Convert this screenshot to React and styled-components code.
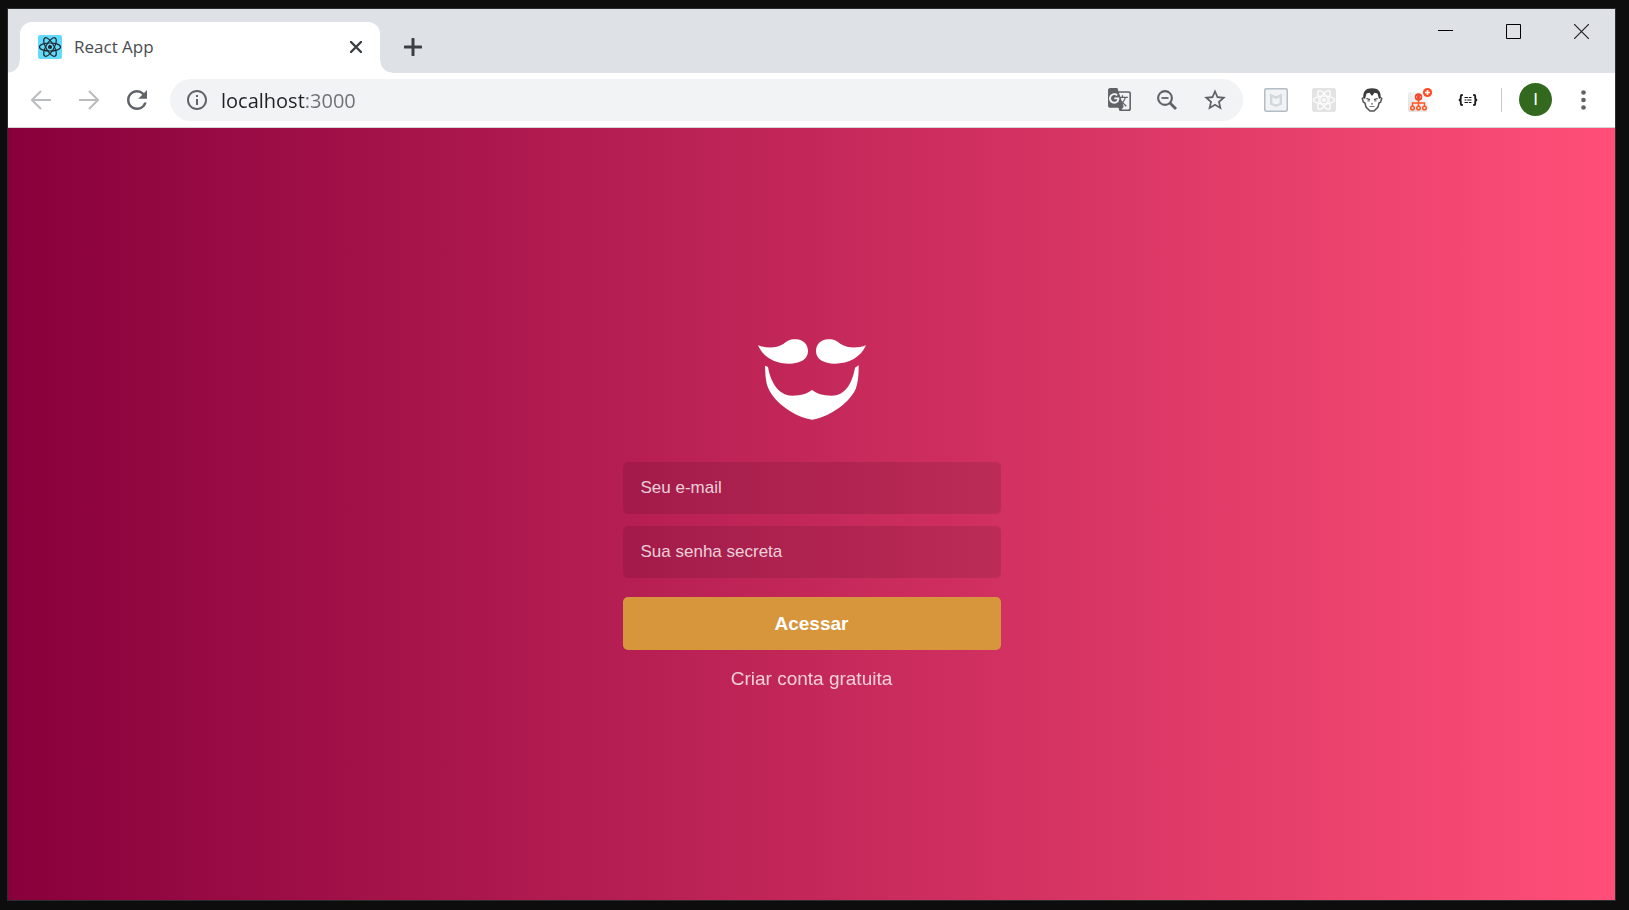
import React from "react";
import styled, { createGlobalStyle } from "styled-components";
import {
  MdGTranslate,
  MdInfoOutline,
  MdRefresh,
  MdStarBorder,
} from "react-icons/md";

const GlobalStyle = createGlobalStyle`
  *, *::before, *::after { box-sizing: border-box; }
  html { background: #0d0d0d; }
  body { margin: 0; font-family: "Liberation Sans", Arial, sans-serif; }
  button, input { font: inherit; }
  svg { display: block; flex: none; }
`;

const Desktop = styled.div`
  display: flex;
  min-height: 100vh;
  padding: 8px 13px 9px 7px;
`;

const BrowserWindow = styled.div`
  flex: 1;
  min-width: 0;
  display: flex;
  flex-direction: column;
  border: 1px solid #2b2d31;
  background: #fff;
`;

const TabStrip = styled.header`
  display: flex;
  height: 64px;
  padding: 13px 0 0 12px;
  background: #dee1e6;
`;

const Tab = styled.div`
  position: relative;
  display: flex;
  align-items: center;
  gap: 12px;
  width: 360px;
  padding: 0 12px 2px 18px;
  border-radius: 12px 12px 0 0;
  background: #fff;

  &::before,
  &::after {
    content: "";
    position: absolute;
    bottom: 0;
    width: 12px;
    height: 12px;
  }
  &::before {
    right: 100%;
    background: radial-gradient(circle at 0 0, transparent 11px, #fff 12px);
  }
  &::after {
    left: 100%;
    background: radial-gradient(circle at 100% 0, transparent 11px, #fff 12px);
  }
`;

const TabTitle = styled.span`
  flex: 1;
  color: #4a4d51;
  font-family: "Open Sans", "Noto Sans", sans-serif;
  font-size: 17px;
  line-height: 24px;
`;

const IconButton = styled.button`
  display: flex;
  flex: none;
  align-items: center;
  justify-content: center;
  width: ${({ $width = 48 }) => $width}px;
  height: ${({ $height = 42 }) => $height}px;
  padding: 0;
  border: 0;
  background: none;
  color: ${({ $color = "#5f6368" }) => $color};
  cursor: pointer;
`;

const NewTabSlot = styled.div`
  display: flex;
  align-items: center;
  padding: 0 0 2px 21px;
`;

const WindowControls = styled.div`
  display: flex;
  height: 36px;
  margin-left: auto;
`;

const Toolbar = styled.nav`
  display: flex;
  align-items: center;
  height: 55px;
  padding: 0 8px 1px 9px;
  border-bottom: 1px solid #d3d5d8;
  background: #fff;
`;

const AddressBar = styled.div`
  display: flex;
  flex: 1;
  align-items: center;
  min-width: 0;
  height: 42px;
  margin: 0 9px;
  padding: 0 4px 0 15px;
  border-radius: 21px;
  background: #f1f3f4;
  color: #5f6368;
`;

const AddressInput = styled.input`
  flex: 1;
  min-width: 0;
  height: 32px;
  margin-left: 12px;
  padding: 2px 0 0;
  border: 0;
  outline: 0;
  background: linear-gradient(90deg, #202124 84px, #6c7075 84px);
  background-clip: text;
  -webkit-background-clip: text;
  color: transparent;
  caret-color: #202124;
  font-family: "Open Sans", "Noto Sans", sans-serif;
  font-size: 20px;
`;

const Divider = styled.span`
  width: 1px;
  height: 24px;
  margin: 0 17px 0 9px;
  background: #c9cbce;
`;

const Avatar = styled.button`
  width: 33px;
  height: 33px;
  margin-right: 7px;
  padding: 0;
  border: 0;
  border-radius: 50%;
  background: #33691e;
  color: #fff;
  font-size: 17px;
  line-height: 33px;
  cursor: pointer;
`;

const Page = styled.main`
  display: flex;
  flex: 1;
  flex-direction: column;
  align-items: center;
  justify-content: center;
  background: linear-gradient(90deg, #88003b, #ff4f78);
`;

const LoginForm = styled.form`
  display: flex;
  flex-direction: column;
  width: 378px;
  max-width: 90%;
  margin-top: 42px;
`;

const Field = styled.input`
  height: 52px;
  margin-bottom: 12px;
  padding: 0 18px;
  border: 0;
  border-radius: 5px;
  background: rgba(0, 0, 0, 0.1);
  color: #fff;
  font-size: 17px;

  &::placeholder {
    color: rgba(255, 255, 255, 0.8);
    opacity: 1;
  }
`;

const SubmitButton = styled.button`
  height: 53px;
  margin-top: 7px;
  border: 0;
  border-radius: 5px;
  background: #d8963c;
  color: #fff;
  font-size: 19px;
  font-weight: bold;
  cursor: pointer;
`;

const SignUpLink = styled.a`
  margin-top: 18px;
  color: #fff;
  font-size: 19px;
  line-height: 21px;
  text-align: center;
  text-decoration: none;
  opacity: 0.78;
`;

function Atom({ size, color, background, strokeWidth }) {
  return (
    <svg width={size} height={size} viewBox="0 0 24 24" aria-hidden="true">
      <rect width="24" height="24" rx="2" fill={background} />
      <g fill="none" stroke={color} strokeWidth={strokeWidth}>
        <ellipse cx="12" cy="12" rx="10.5" ry="4" />
        <ellipse cx="12" cy="12" rx="10.5" ry="4" transform="rotate(60 12 12)" />
        <ellipse cx="12" cy="12" rx="10.5" ry="4" transform="rotate(120 12 12)" />
      </g>
      <circle cx="12" cy="12" r="2" fill={color} />
    </svg>
  );
}

function ArrowIcon({ forward }) {
  return (
    <svg width="20" height="20" viewBox="0 0 20 20" aria-hidden="true">
      <path
        d={forward ? "M0 10H19M10 1l9 9-9 9" : "M20 10H1M10 1l-9 9 9 9"}
        fill="none"
        stroke="currentColor"
        strokeWidth="2"
      />
    </svg>
  );
}

function ZoomOutIcon() {
  return (
    <svg width="20" height="20" viewBox="0 0 20 20" aria-hidden="true">
      <g fill="none" stroke="currentColor">
        <circle cx="8" cy="8" r="6.900" strokeWidth="2.100" />
        <path d="M4.500 8h7" strokeWidth="1.800" />
        <path d="m12.800 12.800 6.200 6.200" strokeWidth="2.800" />
      </g>
    </svg>
  );
}

function ShieldIcon() {
  return (
    <svg width="24" height="24" viewBox="0 0 24 24" aria-hidden="true">
      <rect x=".75" y=".75" width="22.5" height="22.5" rx="1.5" fill="#f1f3f4" stroke="#b3bdc4" strokeWidth="1.5" />
      <path d="M7.2 7.5 12 9.7l4.8-2.2v8.3L12 17.8l-4.800-2Z" fill="none" stroke="#d1d7da" strokeWidth="2.4" />
    </svg>
  );
}

function FaceIcon() {
  return (
    <svg width="22" height="24" viewBox="0 0 22 24" aria-hidden="true">
      <path d="M3 9 1.300 10.500l1 3.500 1.700 1L5 19l4 4h4l4-4 1-4 1.700-1 1-3.500L19 9" fill="#fff" stroke="#555" strokeWidth="1.500" />
      <path d="M2.500 10C1.500 3.500 5 .3 11 .3S20.500 3.500 19.500 10l-1.500 1-1.500-5.500-3-.8L11 8 8.500 4.700l-3 .8L4 11Z" fill="#3c3c3c" />
      <path d="m5.500 10.500 3.500 1.200M16.500 10.500 13 11.700" stroke="#444" strokeWidth="1.300" />
      <path d="M6.500 12.800h2.300M13.200 12.800h2.300M8.500 18.500h5M10 15.800h2" stroke="#777" strokeWidth="1.200" />
    </svg>
  );
}

function SitemapIcon() {
  return (
    <svg width="24" height="24" viewBox="0 0 24 24" overflow="visible" aria-hidden="true">
      <defs>
        <linearGradient id="tile" x1="1" y1="0" x2="0" y2="1">
          <stop offset="0" stopColor="#fff" />
          <stop offset="1" stopColor="#dedede" />
        </linearGradient>
      </defs>
      <rect y="4" width="20" height="20" rx="2" fill="url(#tile)" />
      <g fill="none" stroke="#ff5722" strokeWidth="1.500">
        <path d="M10.500 12v6M4.500 18v-3h12v3" />
        <circle cx="4.500" cy="20" r="1.800" />
        <circle cx="10.500" cy="20" r="1.800" />
        <circle cx="16.500" cy="20" r="1.800" />
      </g>
      <circle cx="10.500" cy="9" r="3.800" fill="#f4482c" />
      <path d="m9.300 7.800-1.200 1.300 1.200 1.200M11.700 7.800l1.200 1.300-1.200 1.200" fill="none" stroke="#ffc0b0" strokeWidth=".7" />
      <circle cx="19.500" cy="4.500" r="4.600" fill="#ff4b1f" />
      <path d="M19.500 2v5M17 4.500h5" stroke="#fff" strokeWidth="1.700" />
    </svg>
  );
}

function BracesIcon() {
  return (
    <svg width="20" height="12" viewBox="0 0 20 12" aria-hidden="true">
      <g fill="none" stroke="#1b1b1b" strokeWidth="1.900">
        <path d="M4.800 1H4Q2.800 1 2.800 2.300v2Q2.800 6 .8 6q2 0 2 1.700v2Q2.800 11 4 11h.8M15.200 1h.8q1.200 0 1.200 1.300v2q0 1.700 2 1.700-2 0-2 1.700v2q0 1.300-1.200 1.300h-.8" />
        <path d="M6.500 3.500h3.700M11 3.500h2.500M6.500 6h2M9.200 6h4.300M6.500 8.500h3.700M11 8.500h2.500" strokeWidth="1.200" />
      </g>
    </svg>
  );
}

function BeardLogo() {
  return (
    <svg width="108" height="81" viewBox="54 57 324 243" fill="#fff" role="img" aria-label="Logo">
      <path d="M54 76C78 85 108 86 130 72C142 63 150 57 168 58C190 59 204 74 204 94C204 118 180 131 148 131C105 131 70 112 54 76Z" />
      <path d="M378 76C354 85 324 86 302 72C290 63 282 57 264 58C242 59 228 74 228 94C228 118 252 131 284 131C327 131 362 112 378 76Z" />
      <path d="M75 137L84 141C91 182 113 227 157 227C185 227 200 221 216 210C232 221 247 227 275 227C320 227 338 182 345 143L356 136C356 165 355 185 347 207C325 255 260 293 216 299C168 293 104 250 85 205C77 185 76 165 75 137Z" />
    </svg>
  );
}

export default function App() {
  return (
    <>
      <GlobalStyle />
      <Desktop>
        <BrowserWindow>
          <TabStrip>
            <Tab>
              <Atom size={24} color="#20232a" background="#61dafb" strokeWidth="1.2" />
              <TabTitle>React App</TabTitle>
              <IconButton $width={24} $height={24} $color="#3c4043" aria-label="Close tab">
                <svg width="12" height="12" viewBox="0 0 12 12" aria-hidden="true">
                  <path d="m1 1 10 10M11 1 1 11" stroke="currentColor" strokeWidth="2.400" strokeLinecap="round" />
                </svg>
              </IconButton>
            </Tab>
            <NewTabSlot>
              <IconButton $width={24} $height={24} $color="#3c4043" aria-label="New tab">
                <svg width="18" height="18" viewBox="0 0 18 18" aria-hidden="true">
                  <path d="M9 1v16M1 9h16" stroke="currentColor" strokeWidth="3" strokeLinecap="round" />
                </svg>
              </IconButton>
            </NewTabSlot>
            <WindowControls>
              <IconButton $width={68} $height={19} $color="#000" aria-label="Minimize">
                <svg width="15" height="15" viewBox="0 0 15 15" aria-hidden="true">
                  <path d="M0 6.500h15" stroke="currentColor" />
                </svg>
              </IconButton>
              <IconButton $width={68} $height={19} $color="#000" aria-label="Maximize">
                <svg width="15" height="15" viewBox="0 0 15 15" aria-hidden="true">
                  <path d="M.5.5h14v14H.5Z" fill="none" stroke="currentColor" />
                </svg>
              </IconButton>
              <IconButton $width={68} $height={19} $color="#222" aria-label="Close window">
                <svg width="15" height="15" viewBox="0 0 15 15" aria-hidden="true">
                  <path d="m0 0 15 15M15 0 0 15" stroke="currentColor" strokeWidth="1.200" />
                </svg>
              </IconButton>
            </WindowControls>
          </TabStrip>

          <Toolbar>
            <IconButton $color="#babcbe" aria-label="Back"><ArrowIcon /></IconButton>
            <IconButton $color="#babcbe" aria-label="Forward"><ArrowIcon forward /></IconButton>
            <IconButton aria-label="Reload"><MdRefresh size={30} /></IconButton>
            <AddressBar>
              <MdInfoOutline size={24} />
              <AddressInput aria-label="Address" defaultValue="localhost:3000" spellCheck={false} />
              <IconButton aria-label="Translate this page"><MdGTranslate size={25} /></IconButton>
              <IconButton aria-label="Zoom"><ZoomOutIcon /></IconButton>
              <IconButton aria-label="Bookmark this page"><MdStarBorder size={26} /></IconButton>
            </AddressBar>
            <IconButton aria-label="Web protection"><ShieldIcon /></IconButton>
            <IconButton aria-label="React developer tools">
              <Atom size={24} color="#fafafa" background="#e3e3e3" strokeWidth="1.5" />
            </IconButton>
            <IconButton aria-label="Face extension"><FaceIcon /></IconButton>
            <IconButton aria-label="Sitemap extension"><SitemapIcon /></IconButton>
            <IconButton aria-label="JSON viewer"><BracesIcon /></IconButton>
            <Divider />
            <Avatar aria-label="Profile">I</Avatar>
            <IconButton aria-label="Menu">
              <svg width="5" height="20" viewBox="0 0 5 20" fill="currentColor" aria-hidden="true">
                <circle cx="2.500" cy="2.500" r="2.300" />
                <circle cx="2.500" cy="10" r="2.300" />
                <circle cx="2.500" cy="17.500" r="2.300" />
              </svg>
            </IconButton>
          </Toolbar>

          <Page>
            <BeardLogo />
            <LoginForm onSubmit={(event) => event.preventDefault()}>
              <Field type="email" placeholder="Seu e-mail" aria-label="Seu e-mail" />
              <Field type="password" placeholder="Sua senha secreta" aria-label="Sua senha secreta" />
              <SubmitButton type="submit">Acessar</SubmitButton>
              <SignUpLink href="#register">Criar conta gratuita</SignUpLink>
            </LoginForm>
          </Page>
        </BrowserWindow>
      </Desktop>
    </>
  );
}
